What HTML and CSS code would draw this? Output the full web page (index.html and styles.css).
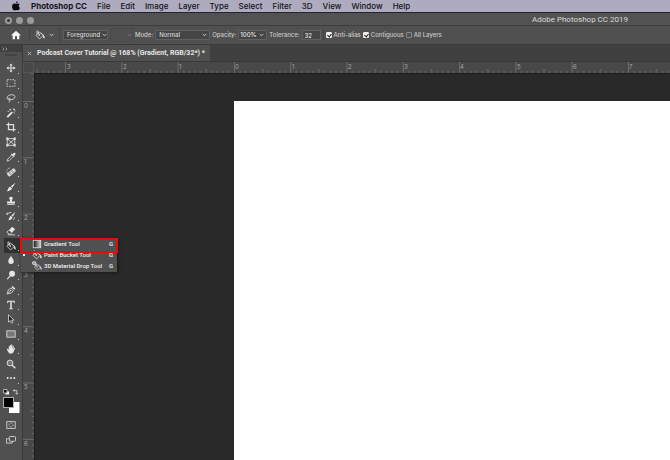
FILE: index.html
```html
<!DOCTYPE html>
<html lang="en">
<head>
<meta charset="utf-8">
<title>Adobe Photoshop CC 2019</title>
<link rel="stylesheet" href="styles.css">
</head>
<body>
<nav class="menubar" aria-label="Application menu">
  <a class="apple" href="#" aria-label="Apple"><svg viewBox="0 0 12 12"><path d="M8 .2C8.100 1.700 7 2.600 6 2.500 5.900 1.300 7 .3 8 .2zM6.200 3.400c.6 0 1.200-.6 2.200-.5.9 0 1.600.5 2 1-1.700 1-1.500 3.500.4 4.300-.5 1.400-1.500 3.100-2.600 3.100-.8 0-1.100-.5-2-.5s-1.300.5-2.100.5C2.600 11.300 1.300 8.700 1.300 6.500c0-2.300 1.400-3.600 2.800-3.600.9 0 1.500.5 2.100.5z"/></svg></a>
  <a class="app" href="#">Photoshop CC</a>
  <a href="#">File</a><a href="#">Edit</a><a href="#">Image</a><a href="#">Layer</a><a href="#">Type</a><a href="#">Select</a><a href="#">Filter</a><a href="#">3D</a><a href="#">View</a><a href="#">Window</a><a href="#">Help</a>
</nav>
<header class="titlebar">
  <div class="lights"><button class="light dirty" aria-label="Close"></button><button class="light" aria-label="Minimize"></button><button class="light" aria-label="Zoom"></button></div>
  <h1>Adobe Photoshop CC 2019</h1>
</header>
<form class="options">
  <button class="home" type="button" aria-label="Home"><svg viewBox="0 0 12 12"><path d="M6 .8 11.600 6l-.8.8L10 6.200V11H7.200V7.500H4.800V11H2V6.200l-.8.6L.4 6z" fill="#f4f4f4"/></svg></button>
  <button class="preset" type="button" aria-label="Paint Bucket preset"><svg class="bucket" viewBox="0 0 12 12"><use href="#bucket"/></svg><svg class="chev" viewBox="0 0 5 4"><use href="#chev"/></svg></button>
  <span class="pick fill"><select aria-label="Fill source"><option>Foreground</option></select><svg class="chev" viewBox="0 0 5 4"><use href="#chev"/></svg></span>
  <button class="pattern" type="button" disabled aria-label="Pattern"><svg class="chev" viewBox="0 0 5 4"><use href="#chev"/></svg></button>
  <label for="mode">Mode:</label>
  <span class="pick mode"><select id="mode"><option>Normal</option></select><svg class="chev" viewBox="0 0 5 4"><use href="#chev"/></svg></span>
  <label for="opacity">Opacity:</label>
  <span class="pick opacity"><input id="opacity" value="100%"><svg class="chev" viewBox="0 0 5 4"><use href="#chev"/></svg></span>
  <label for="tolerance">Tolerance:</label>
  <input id="tolerance" class="number" value="32">
  <label class="check first"><input type="checkbox" checked>Anti-alias</label>
  <label class="check"><input type="checkbox" checked>Contiguous</label>
  <label class="check"><input type="checkbox">All Layers</label>
</form>
<div class="workspace">
  <aside class="toolbar">
    <button class="expand" aria-label="Expand panel"><svg viewBox="0 0 6 4"><path d="M.5.5 2 2 .5 3.500M3.500.5 5 2 3.500 3.500" fill="none" stroke="#bbb" stroke-width=".7"/></svg></button>
    <div class="grip"></div>
    <ul class="tools">
      <li><button aria-label="Move"><svg viewBox="0 0 12 12"><path class="f" d="M6 .5 8 3H6.600v2.400H9V4l2.500 2L9 8V6.600H6.600V9H8L6 11.500 4 9h1.400V6.600H3V8L.5 6 3 4v1.400h2.400V3H4z"/></svg></button></li>
      <li><button aria-label="Marquee"><svg viewBox="0 0 12 12"><rect class="s" x="1.300" y="2" width="9.400" height="8" stroke-dasharray="2 1.200"/></svg></button></li>
      <li><button aria-label="Lasso"><svg viewBox="0 0 12 12"><path class="s" d="M3.400 8.200C.4 7.500.7 4 3.800 2.700c3-1.300 7-.6 7 1.700S8 8.300 5 8.100c-2-.1-2.700-1.500-1.500-1.900 1.300-.4 2 1.300 1 2.600-.5.7-.8 1.500-.6 2.500"/></svg></button></li>
      <li><button aria-label="Magic Wand"><svg viewBox="0 0 12 12"><path d="m1.500 11 6-6" stroke="#e6e6e6" stroke-width="2.300"/><path class="s" d="M5 1v2M4 2h2M9.500.5v2.200M8.400 1.600h2.200M9 5l1.800 1.500M10 3.500h1.500M2 4.200h1.500"/></svg></button></li>
      <li><button aria-label="Crop"><svg viewBox="0 0 12 12"><path class="s t" d="M3 .5V9h8.500M.5 3H9v8.500"/></svg></button></li>
      <li><button class="plain" aria-label="Frame"><svg viewBox="0 0 12 12"><path class="s" d="M1.500 2h9v8h-9zM1.500 2l9 8M10.500 2l-9 8M.5 1h2v2h-2zM9.500 1h2v2h-2zM.5 9h2v2h-2zM9.500 9h2v2h-2z"/></svg></button></li>
      <li><button aria-label="Eyedropper"><svg viewBox="0 0 12 12"><path class="s" d="m7 3.500-5 5L1.400 11l2.400-.7 5-5"/><path class="f" d="m5.800 2.700 1-.8 1 .9C9 1 10 .4 11 1.200s.4 1.900-1.400 3.200l.8.900-.9.9z"/></svg></button></li>
      <li><button aria-label="Healing Brush"><svg viewBox="0 0 12 12"><g transform="rotate(-40 6.500 6.500)"><rect x="1" y="4" width="11" height="5" rx="1.500" fill="#d8d8d8"/><path d="M4.300 4v5M8.700 4v5M5.500 5.500h2M5.500 7.500h2" stroke="#666" stroke-width=".7"/></g><path class="s" d="M1.300 7C0 4 2 1.300 5 1.200" stroke-dasharray="1 .8"/></svg></button></li>
      <li><button aria-label="Brush"><svg viewBox="0 0 12 12"><path class="f" d="M11.300.8 7.700 7 5.800 5.200zM5.200 5.800l1.900 1.800C6.800 9.800 4.500 11 1 11c1.900-1.200 1.200-4.800 4.200-5.200z"/></svg></button></li>
      <li><button aria-label="Clone Stamp"><svg viewBox="0 0 12 12"><path class="f" d="M6 .8c2.300 0 2.700 1.900 1.700 3.100-.7.9-.6 2.300-.4 2.600h3.500v2.400H1.200V6.500h3.500c.2-.3.300-1.700-.4-2.600C3.300 2.700 3.700.8 6 .8zM1.500 9.800h9v1h-9z"/></svg></button></li>
      <li><button aria-label="History Brush"><svg viewBox="0 0 12 12"><path class="f" d="M11.300.8 8.300 7 6.400 5.500zM6 6l1.700 1.500c-.5 2.200-2 3.500-5.200 3.500C4.400 9.800 3.700 6.500 6 6z"/><path class="s" d="M.5 3.500h2l1-1.500h3M1.500 2l-.8 1.500L2.200 5M10 7.500c.4 1.400-.2 2.500-1.500 3"/></svg></button></li>
      <li><button aria-label="Eraser"><svg viewBox="0 0 12 12"><path class="f" d="M7.300 1 11 4 7 8 3.500 5z"/><path class="s" d="M3.300 5 1 7.500 4.200 10h1L7 8M2 10.600h9"/></svg></button></li>
      <li class="current">
        <button aria-label="Paint Bucket" aria-haspopup="menu" aria-expanded="true"><svg viewBox="0 0 12 12"><g id="bucket"><path class="s" d="m5 2.300 5 4.200-4.500 4.200L1.200 6.400zM4.800 5.900 3.500 1.500C3.300.6 2 .8 2.200 1.700L2.700 5"/><circle class="f" cx="5.100" cy="6.100" r="1"/><path class="f" d="m6.800 3 3.600 3c1.300 1.800 1.800 3.300.6 4.200-1.400-.1-1.400-1.800-1.100-3.800L6 2.800z"/></g></svg></button>
        <div class="flyout" role="menu">
          <button role="menuitem"><svg viewBox="0 0 12 12"><defs><linearGradient id="ramp"><stop stop-color="#111"/><stop offset="1" stop-color="#ddd"/></linearGradient></defs><rect x="1.500" y="1.500" width="9" height="9" fill="url(#ramp)" stroke="#ddd"/></svg><span>Gradient Tool</span><kbd>G</kbd></button>
          <button role="menuitem" class="chosen"><svg viewBox="0 0 12 12"><use href="#bucket"/></svg><span>Paint Bucket Tool</span><kbd>G</kbd></button>
          <button role="menuitem"><svg viewBox="0 0 12 12"><g transform="translate(2 2) scale(.83)"><use href="#bucket"/></g><path class="s" d="M.5 1.500 2.500.5l2 1v2l-2 1-2-1zM.5 1.500l2 1 2-1M2.500 2.500v2"/></svg><span>3D Material Drop Tool</span><kbd>G</kbd></button>
          <div class="marker"></div>
        </div>
      </li>
      <li><button aria-label="Blur"><svg viewBox="0 0 12 12"><path class="f" d="M6 1c1 2.300 3.300 4.300 3.300 6.600a3.300 3.300 0 0 1-6.600 0C2.700 5.300 5 3.300 6 1z"/></svg></button></li>
      <li><button aria-label="Dodge"><svg viewBox="0 0 12 12"><circle class="f" cx="7.300" cy="4.500" r="3.500"/><path class="s t" d="M5 7 1.500 11"/></svg></button></li>
      <li><button aria-label="Pen"><svg viewBox="0 0 12 12"><path class="s" d="M1.500 10.700 2.700 6 6 3.500 9 6.300 6.500 9.500zM1.500 10.700l3.700-3.600"/><circle class="f" cx="5.600" cy="6.600" r=".9"/><path class="f" d="m6.500 2.300 1.300-1.200 3.500 3.200L10 5.700z"/></svg></button></li>
      <li><button aria-label="Type"><svg viewBox="0 0 12 12"><path class="f" d="M1.500 1h9v2.800H9.700L9 2.200H6.900V10l1.500.4v.8H3.600v-.8L5.100 10V2.200H3l-.7 1.600h-.8z"/></svg></button></li>
      <li><button aria-label="Path Selection"><svg viewBox="0 0 12 12"><path d="M3 1v8.800l2.200-2L6.700 11l1.500-.7-1.500-3h3z" fill="#222" stroke="#e4e4e4" stroke-width=".9"/></svg></button></li>
      <li><button aria-label="Rectangle"><svg viewBox="0 0 12 12"><rect x="1" y="2.200" width="10" height="7.600" fill="#777" stroke="#e0e0e0"/></svg></button></li>
      <li><button aria-label="Hand"><svg viewBox="0 0 12 12"><path class="f" d="M3.300 7V3c0-.8 1-.8 1.100 0l.3 2.300V1.500c0-.9 1.200-.9 1.200 0V5L6.300 1c.1-.8 1.200-.7 1.200.1L7.400 5.300l.8-2.900c.2-.8 1.300-.6 1.100.3L8.900 6l.9-1.200c.6-.7 1.300-.2 1 .5L9 9.500C8.300 11 7.500 11.500 6 11.500c-2 0-2.700-.8-3.500-2.300L1 6.500c-.2-.8.600-1.100 1.100-.6z"/></svg></button></li>
      <li><button class="plain" aria-label="Zoom"><svg viewBox="0 0 12 12"><circle cx="4.800" cy="4.800" r="3.500" fill="#777" stroke="#e2e2e2" stroke-width="1.100"/><path d="m7.500 7.500 3.700 3.700" stroke="#e2e2e2" stroke-width="1.800"/></svg></button></li>
      <li><button aria-label="Edit Toolbar"><svg viewBox="0 0 12 12"><circle class="f" cx="2" cy="6" r="1.200"/><circle class="f" cx="6" cy="6" r="1.200"/><circle class="f" cx="10" cy="6" r="1.200"/></svg></button></li>
    </ul>
    <div class="colors">
      <svg viewBox="0 0 18 26" role="img" aria-label="Foreground black, background white">
        <path d="M2.500 2.500H6v3H2.500z" fill="#fff"/><path d="M.5.500h3.500v3.500H.5z" fill="#111" stroke="#ccc" stroke-width=".8"/>
        <path d="M10.500 1.500h3.300v3.300M11.500.300 10.200 1.500l1.300 1.300M12.500 4l1.300 1.300L15.100 4" fill="none" stroke="#ddd" stroke-width=".8"/>
        <rect x="6" y="13" width="10.500" height="11" fill="#fff"/><rect x=".5" y="8.500" width="10" height="10" fill="#000" stroke="#b0b0b0"/>
      </svg>
    </div>
    <button class="bottom mask" aria-label="Quick Mask"><svg viewBox="0 0 12 12"><rect class="s" x="1" y="2" width="10" height="8"/><circle class="s" cx="6" cy="6" r="2.300" stroke-dasharray="1 .6"/></svg></button>
    <button class="bottom" aria-label="Screen Mode"><svg viewBox="0 0 12 12"><path class="s" d="M3.500 4.500h-3v5.200h7V8"/><rect class="s" x="4" y="1.800" width="7.400" height="5.700" rx="1"/></svg></button>
  </aside>
  <main class="document">
    <div class="tabs"><div class="tab"><button aria-label="Close document"><svg viewBox="0 0 6 6"><path d="m1 1 4 4m0-4L1 5" stroke="#ccc" stroke-width=".9"/></svg></button><span>Podcast Cover Tutorial @ 168% (Gradient, RGB/32*) *</span></div></div>
    <div class="stage">
      <div class="corner"></div>
      <svg class="ruler across">
        <defs><pattern id="inch" x="31" width="56.300" height="11" patternUnits="userSpaceOnUse"><path d="M.5 0v11M6.100 9v2M11.800 9v2M17.400 9v2M23 9v2M28.700 7v4M34.300 9v2M39.900 9v2M45.500 9v2M51.200 9v2" stroke="#707070" stroke-width=".9"/></pattern></defs>
        <rect width="100%" height="11" fill="url(#inch)"/>
        <text x="33" y="7">3</text><text x="89" y="7">2</text><text x="145" y="7">1</text><text x="201" y="7">0</text><text x="258" y="7">1</text><text x="314" y="7">2</text><text x="370" y="7">3</text><text x="426" y="7">4</text><text x="483" y="7">5</text><text x="539" y="7">6</text><text x="595" y="7">7</text>
      </svg>
      <svg class="ruler down">
        <defs><pattern id="inchdown" y="28" width="11" height="56.300" patternUnits="userSpaceOnUse"><path d="M0 .5h11M9 6.100h2M9 11.800h2M9 17.400h2M9 23h2M7 28.700h4M9 34.300h2M9 39.900h2M9 45.500h2M9 51.200h2" stroke="#707070" stroke-width=".9"/></pattern></defs>
        <rect width="11" height="100%" fill="url(#inchdown)"/>
        <text x="1" y="35">0</text><text x="1" y="91">1</text><text x="1" y="147">2</text><text x="1" y="204">3</text><text x="1" y="260">4</text><text x="1" y="316">5</text><text x="1" y="373">6</text>
      </svg>
      <div class="canvas"><div class="artboard"></div></div>
    </div>
  </main>
</div>
<svg class="defs" aria-hidden="true"><defs><path id="chev" d="M.7 1 2.500 2.800 4.300 1" fill="none" stroke="#d6d6d6" stroke-width=".9"/></defs></svg>
</body>
</html>
```
FILE: styles.css
```css
* { box-sizing: border-box; }
html, body { height: 100%; }
body {
  margin: 0;
  display: flex;
  flex-direction: column;
  overflow: hidden;
  background: #505050;
  color: #e2e2e2;
  font: 500 6px/8px Inter, "Liberation Sans", sans-serif;
}
button, input, select { font: inherit; color: inherit; border: 0; margin: 0; padding: 0; background: none; appearance: none; }
button { display: flex; align-items: center; justify-content: center; }
svg { display: block; }
.f { fill: #e6e6e6; }
.s { fill: none; stroke: #dedede; stroke-width: 1; }
.t { stroke-width: 1.5; }
.defs { position: absolute; width: 0; height: 0; }
.chev { width: 5px; height: 4px; flex: none; }

.menubar {
  display: flex;
  align-items: center;
  gap: 10px;
  height: 13px;
  padding-left: 11px;
  background: #aeabbe;
  border-bottom: 1px solid #25242d;
  font-size: 8px;
  line-height: 12px;
}
.menubar a { color: #14131a; text-decoration: none; }
.menubar .app { font-weight: 700; }
.apple svg { width: 10px; height: 10px; fill: #08080a; }

.titlebar {
  display: flex;
  justify-content: space-between;
  align-items: center;
  height: 13px;
  padding: 2px 42px 0 5px;
  border-bottom: 1px solid #3e3e3e;
  background: #525252;
}
.titlebar h1 { margin: 0; font: 400 8px/12px Roboto, "Liberation Sans", sans-serif; color: #dadada; }
.lights { display: flex; gap: 4px; }
.light { width: 7px; height: 7px; border-radius: 50%; background: #9b9b9e; }
.dirty::after { content: ""; width: 3px; height: 3px; border-radius: 50%; background: #333; }

.options {
  display: flex;
  align-items: center;
  gap: 2px;
  height: 19px;
  padding-left: 11px;
  background: #505050;
  border-bottom: 1px solid #3a3a3a;
  color: #c9c9c9;
}
.home svg { width: 10px; height: 10px; }
.preset { gap: 4px; margin: 0 1px 0 6px; padding: 0 5px; height: 14px; border: solid #444; border-width: 0 1px; }
.bucket { width: 10px; height: 10px; }
.pick { display: flex; align-items: center; height: 10px; padding: 0 2px 0 3px; border: 1px solid #606060; border-radius: 1px; background: #454545; color: #d8d8d8; }
.pick select, .pick input { flex: 1; min-width: 0; width: 100%; height: 8px; }
.fill { width: 45px; padding-right: 0; }
.mode { width: 55px; }
.opacity { width: 29px; padding-left: 1px; color: #eee; }
.pattern { justify-content: flex-end; width: 23px; height: 14px; border: 1px solid #4a4a4a; border-radius: 1px; }
.pattern .chev { opacity: .35; }
.number { width: 19px; height: 10px; padding: 0 2px; border: 1px solid #606060; background: #454545; color: #eee; }
.check { display: flex; align-items: center; gap: 2px; height: 12px; }
.first { padding-left: 2px; border-left: 1px solid #444; }
.check input { width: 6px; height: 6px; border: 1px solid #8a8a8a; border-radius: 1px; }
.check input:checked { border-color: #f0f0f0; background: #f0f0f0; }
.check input:checked::after { content: ""; display: block; width: 2px; height: 3px; margin-left: 1px; border: solid #222; border-width: 0 1px 1px 0; transform: rotate(40deg); }

.workspace { flex: 1; display: flex; min-height: 0; }
.toolbar { display: flex; flex-direction: column; width: 23px; border-right: 1px solid #3a3a3a; background: #505050; }
.expand { height: 7px; padding-left: 2px; justify-content: flex-start; background: #404040; }
.expand svg { width: 6px; height: 4px; }
.grip { height: 2px; margin: 2px 5px 5px; background: #434343; }
.tools { flex: 1; display: flex; flex-direction: column; margin: 0; padding: 0 2px 0 4px; list-style: none; }
.tools li { position: relative; flex: 1; display: flex; }
.tools li > button { position: relative; flex: 1; padding-right: 2px; }
.tools li > button > svg, .bottom svg { width: 10px; height: 10px; }
.tools li > button::after { content: ""; position: absolute; right: 1px; bottom: 2px; width: 1px; height: 1px; background: #c4c4c4; }
.tools li > button.plain::after { display: none; }
.current > button { background: #303030; }
.colors { padding: 3px 2px 0 3px; }
.colors svg { width: 18px; height: 26px; }
.bottom { height: 15px; padding-right: 0; }
.mask { margin-top: 2px; }
.toolbar .bottom:last-child { margin-bottom: 13px; }

.flyout { position: absolute; z-index: 2; left: 17px; top: 0; width: 96px; height: 34px; background: #505050; box-shadow: 1px 1px 3px #181818; font-family: Roboto, "Liberation Sans", sans-serif; }
.flyout button { width: 100%; height: 11px; padding: 0 4px 0 11px; gap: 2px; color: #f0f0f0; }
.flyout button svg { width: 10px; height: 10px; }
.flyout button span { flex: 1; text-align: left; white-space: nowrap; }
.flyout kbd { font: inherit; }
.flyout .chosen::before { content: ""; width: 2px; height: 2px; margin: 0 5px 0 -9px; background: #eee; }
.marker { position: absolute; inset: 0 -1px auto; height: 15px; border: 2px solid #e80b08; }

.document { flex: 1; display: flex; flex-direction: column; min-width: 0; }
.tabs { display: flex; height: 17px; background: #404040; border-bottom: 1px solid #3a3a3a; }
.tab { display: flex; align-items: center; gap: 5px; padding: 0 5px 0 4px; background: #505050; font-family: Roboto, "Liberation Sans", sans-serif; font-size: 7px; font-weight: 700; color: #e4e4e4; }
.tab svg { width: 5px; height: 5px; }
.stage { flex: 1; display: grid; grid-template: 11px 1fr / 11px 1fr; min-height: 0; background: #484848; }
.corner { border: 1px solid #555; }
.ruler { width: 100%; height: 100%; min-width: 0; min-height: 0; }
.ruler text { fill: #a6a6a6; font-size: 6px; font-weight: 400; }
.canvas { display: flex; padding: 27px 0 0 199px; background: #292929; border: solid #1c1c1c; border-width: 1px 0 0 1px; }
.artboard { flex: 1; background: #fff; }
```
